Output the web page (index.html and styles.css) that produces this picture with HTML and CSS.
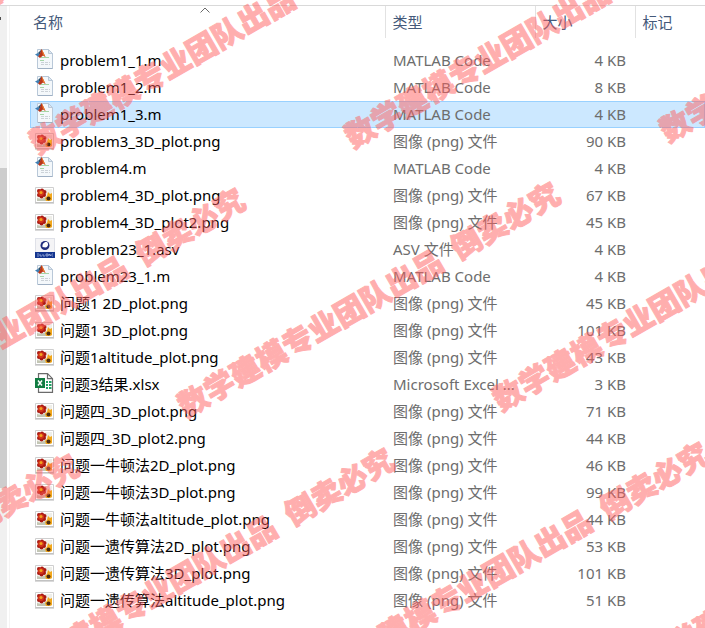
FILE: index.html
```html
<!DOCTYPE html>
<html lang="zh-CN">
<head>
  <meta charset="UTF-8">
  <meta name="viewport" content="width=device-width, initial-scale=1.0">
  <title>文件列表</title>
  <link rel="stylesheet" href="styles.css">
</head>
<body>
  <!-- icon set -->
  <svg class="symbols" aria-hidden="true">
    <symbol id="icon-matlab" viewBox="0 0 20 20">
      <path d="M2.5 .5h11l4 4v15h-15z" fill="#f4f8fb" stroke="#b9c8d8"/>
      <path d="M13.500 .5v4h4z" fill="#dfe8f1" stroke="#b9c8d8"/>
      <path d="M3 19.500h14.500" stroke="#9fb0c4"/>
      <path d="M6 8.500h8M5 11.500h4" stroke="#a5d6a7"/>
      <path d="M6 13.500h9M6 15.500h9" stroke="#ccd2d8" stroke-dasharray="3 1"/>
      <path d="M0 5.500l3-1.500 2 2-2 1.500z" fill="#3d7fb5"/>
      <path d="M3 4l3.500-3.500L5 6z" fill="#27506f"/>
      <path d="M6.500 0C8 2 9 5 10.500 8L8 6.500 5 9 3 7.500C5 6 5.500 2 6.500 0z" fill="#b8371c"/>
      <path d="M6.500 0C8 2 9 5 10.500 8L8 6z" fill="#ec7a2c"/>
    </symbol>
    <symbol id="icon-image" viewBox="0 0 20 20">
      <path d="M.5 3.500h18v15H.5z" fill="#fff" stroke="#cfcfcf"/>
      <path d="M0 19h19" stroke="#b4b4b4"/>
      <path d="M2 5h15v12H2z" fill="#eeeee8"/>
      <path d="M2 14l4 1 5-2v4H2z" fill="#c3c6b4"/>
      <g fill="#a91812">
        <circle cx="4" cy="7" r="2"/>
        <circle cx="7" cy="6.500" r="2"/>
        <circle cx="9.500" cy="8" r="2"/>
        <circle cx="9" cy="11" r="2"/>
        <circle cx="6.500" cy="12.500" r="2"/>
        <circle cx="4" cy="11" r="2"/>
      </g>
      <circle cx="6" cy="9" r="3" fill="#d2351b"/>
      <circle cx="6" cy="8.500" r="1.500" fill="#f1a51e"/>
      <path d="M10 14l2-2 1-4 2 2 2-1v7l-2 1h-4z" fill="#f3a81c"/>
      <circle cx="13.500" cy="14.500" r="2" fill="#4b2a10"/>
    </symbol>
    <symbol id="icon-asv" viewBox="0 0 20 20">
      <path d="M0 0h20v20H0z" fill="#dfe1e8"/>
      <path d="M1 1h18v13H1z" fill="#f4f4f6"/>
      <path d="M0 14h20v6H0z" fill="#14358f"/>
      <circle cx="10" cy="7.500" r="4.500" fill="#202c7c"/>
      <path d="M7.500 9C7 6 9 3.500 12 4c2 2 1 5-1.500 5.500z" fill="#fff"/>
      <path d="M2 16h2M2 18h2M5 16v2h2M8 16v2h2M11 16h2v2h-2zM14 18v-2l2 2v-2M17 16h1M17 18h1" fill="none" stroke="#b9c6ea" stroke-width=".7"/>
    </symbol>
    <symbol id="icon-excel" viewBox="0 0 20 20">
      <path d="M3.500.7h9l5 5v13.600h-14z" fill="#fff" stroke="#6b6b6b" stroke-width="1.200"/>
      <path d="M12.500.7v5h5" fill="none" stroke="#6b6b6b" stroke-width="1.200"/>
      <path d="M11 8h2v2h-2zM14 8h2.500v2H14zM11 11h2v2h-2zM14 11h2.500v2H14zM11 14h2v2h-2zM14 14h2.500v2H14z" fill="#21a366"/>
      <path d="M0 5h10v10H0z" fill="#107c41"/>
      <path d="M3 7.500l4 5M7 7.500l-4 5" stroke="#fff" stroke-width="1.500"/>
    </symbol>
  </svg>

  <div class="explorer">
    <div class="scrollbar"><div class="thumb"></div></div>

    <main class="files">
      <table>
        <colgroup>
          <col class="col-name">
          <col class="col-type">
          <col class="col-size">
          <col>
        </colgroup>
        <thead>
          <tr>
            <th>名称<svg class="sort" viewBox="0 0 10 6"><path d="M.5 5.500L5 1l4.500 4.500" fill="none" stroke="#6a6a6a"/></svg></th>
            <th>类型</th>
            <th>大小</th>
            <th>标记</th>
          </tr>
        </thead>
        <tbody>
          <tr><td><svg class="icon"><use href="#icon-matlab"/></svg>problem1_1.m</td><td>MATLAB Code</td><td>4 KB</td><td></td></tr>
          <tr><td><svg class="icon"><use href="#icon-matlab"/></svg>problem1_2.m</td><td>MATLAB Code</td><td>8 KB</td><td></td></tr>
          <tr class="selected"><td><svg class="icon"><use href="#icon-matlab"/></svg>problem1_3.m</td><td>MATLAB Code</td><td>4 KB</td><td></td></tr>
          <tr><td><svg class="icon"><use href="#icon-image"/></svg>problem3_3D_plot.png</td><td>图像 (png) 文件</td><td>90 KB</td><td></td></tr>
          <tr><td><svg class="icon"><use href="#icon-matlab"/></svg>problem4.m</td><td>MATLAB Code</td><td>4 KB</td><td></td></tr>
          <tr><td><svg class="icon"><use href="#icon-image"/></svg>problem4_3D_plot.png</td><td>图像 (png) 文件</td><td>67 KB</td><td></td></tr>
          <tr><td><svg class="icon"><use href="#icon-image"/></svg>problem4_3D_plot2.png</td><td>图像 (png) 文件</td><td>45 KB</td><td></td></tr>
          <tr><td><svg class="icon"><use href="#icon-asv"/></svg>problem23_1.asv</td><td>ASV 文件</td><td>4 KB</td><td></td></tr>
          <tr><td><svg class="icon"><use href="#icon-matlab"/></svg>problem23_1.m</td><td>MATLAB Code</td><td>4 KB</td><td></td></tr>
          <tr><td><svg class="icon"><use href="#icon-image"/></svg>问题1 2D_plot.png</td><td>图像 (png) 文件</td><td>45 KB</td><td></td></tr>
          <tr><td><svg class="icon"><use href="#icon-image"/></svg>问题1 3D_plot.png</td><td>图像 (png) 文件</td><td>101 KB</td><td></td></tr>
          <tr><td><svg class="icon"><use href="#icon-image"/></svg>问题1altitude_plot.png</td><td>图像 (png) 文件</td><td>43 KB</td><td></td></tr>
          <tr><td><svg class="icon"><use href="#icon-excel"/></svg>问题3结果.xlsx</td><td>Microsoft Excel ...</td><td>3 KB</td><td></td></tr>
          <tr><td><svg class="icon"><use href="#icon-image"/></svg>问题四_3D_plot.png</td><td>图像 (png) 文件</td><td>71 KB</td><td></td></tr>
          <tr><td><svg class="icon"><use href="#icon-image"/></svg>问题四_3D_plot2.png</td><td>图像 (png) 文件</td><td>44 KB</td><td></td></tr>
          <tr><td><svg class="icon"><use href="#icon-image"/></svg>问题一牛顿法2D_plot.png</td><td>图像 (png) 文件</td><td>46 KB</td><td></td></tr>
          <tr><td><svg class="icon"><use href="#icon-image"/></svg>问题一牛顿法3D_plot.png</td><td>图像 (png) 文件</td><td>99 KB</td><td></td></tr>
          <tr><td><svg class="icon"><use href="#icon-image"/></svg>问题一牛顿法altitude_plot.png</td><td>图像 (png) 文件</td><td>44 KB</td><td></td></tr>
          <tr><td><svg class="icon"><use href="#icon-image"/></svg>问题一遗传算法2D_plot.png</td><td>图像 (png) 文件</td><td>53 KB</td><td></td></tr>
          <tr><td><svg class="icon"><use href="#icon-image"/></svg>问题一遗传算法3D_plot.png</td><td>图像 (png) 文件</td><td>101 KB</td><td></td></tr>
          <tr><td><svg class="icon"><use href="#icon-image"/></svg>问题一遗传算法altitude_plot.png</td><td>图像 (png) 文件</td><td>51 KB</td><td></td></tr>
        </tbody>
      </table>
    </main>

    <!-- watermark, repeated diagonally over the list -->
    <svg class="watermark" aria-hidden="true">
      <defs>
        <text id="mark" transform="rotate(-30)">数学建模专业团队出品&#8194;倒卖必究</text>
      </defs>
      <use href="#mark" x="-277" y="161"/>
      <use href="#mark" x="38" y="155"/>
      <use href="#mark" x="353" y="149"/>
      <use href="#mark" x="668" y="143"/>
      <use href="#mark" x="-129" y="424"/>
      <use href="#mark" x="186" y="418"/>
      <use href="#mark" x="501" y="412"/>
      <use href="#mark" x="-295" y="690"/>
      <use href="#mark" x="20" y="684"/>
      <use href="#mark" x="335" y="678"/>
      <use href="#mark" x="650" y="672"/>
    </svg>
  </div>
</body>
</html>
```
FILE: styles.css
```css
body {
  margin: 0;
  background: #fff;
  color: #000;
  font: 15px/27px "Noto Sans", "Noto Sans CJK SC", sans-serif;
}

.symbols {
  display: none;
}

.explorer {
  position: relative;
  display: flex;
  min-height: 100vh;
  box-sizing: border-box;
  padding-top: 5px;
  overflow: hidden;
}

.explorer::before {
  content: "";
  position: absolute;
  top: 5px;
  left: 0;
  right: 0;
  height: 1px;
  background: #d9d9d9;
}

.scrollbar {
  width: 7px;
  margin-right: 2px;
  background: #f0f0f0;
}

/* edge of the scroll arrow */
.scrollbar::before {
  content: "";
  display: block;
  width: 1px;
  height: 3px;
  margin-top: 12px;
  background: #505050;
}

.thumb {
  height: 320px;
  margin-top: 148px;
  background: #cdcdcd;
}

.files {
  flex: 1;
  padding-left: 20px;
  border-left: 1px solid #f4f4f4;
}

table {
  width: 100%;
  table-layout: fixed;
  border-collapse: collapse;
}

.col-name {
  width: 355px;
}

.col-type {
  width: 150px;
}

.col-size {
  width: 100px;
}

th {
  position: relative;
  height: 31px;
  padding: 2px 7px 0;
  border-right: 1px solid #e2e2e2;
  color: #44597a;
  font-weight: normal;
  text-align: left;
}

th:first-child {
  padding-left: 3px;
}

th:last-child {
  border-right: none;
}

/* gap between the header and the first row */
tbody::before {
  content: "";
  display: block;
  height: 9px;
}

.sort {
  position: absolute;
  top: 2px;
  left: 48%;
  width: 10px;
  height: 6px;
}

td {
  height: 27px;
  padding: 0 8px;
  color: #6d6d6d;
  white-space: nowrap;
}

td:first-child {
  padding-left: 5px;
  color: #000;
}

td:nth-child(3) {
  padding-right: 9px;
  text-align: right;
}

.icon {
  width: 20px;
  height: 20px;
  margin-right: 5px;
  vertical-align: -3px;
}

.selected {
  background: #cce8ff;
  outline: 1px solid #99d1ff;
  outline-offset: -1px;
}

.watermark {
  position: absolute;
  top: 0;
  left: 0;
  width: 100%;
  height: 100%;
  opacity: .5;
  pointer-events: none;
}

.watermark text {
  fill: #ff6060;
  stroke: #ff6060;
  stroke-width: 1px;
  stroke-linejoin: round;
  font: 900 30px "Noto Sans CJK SC", sans-serif;
}
```
